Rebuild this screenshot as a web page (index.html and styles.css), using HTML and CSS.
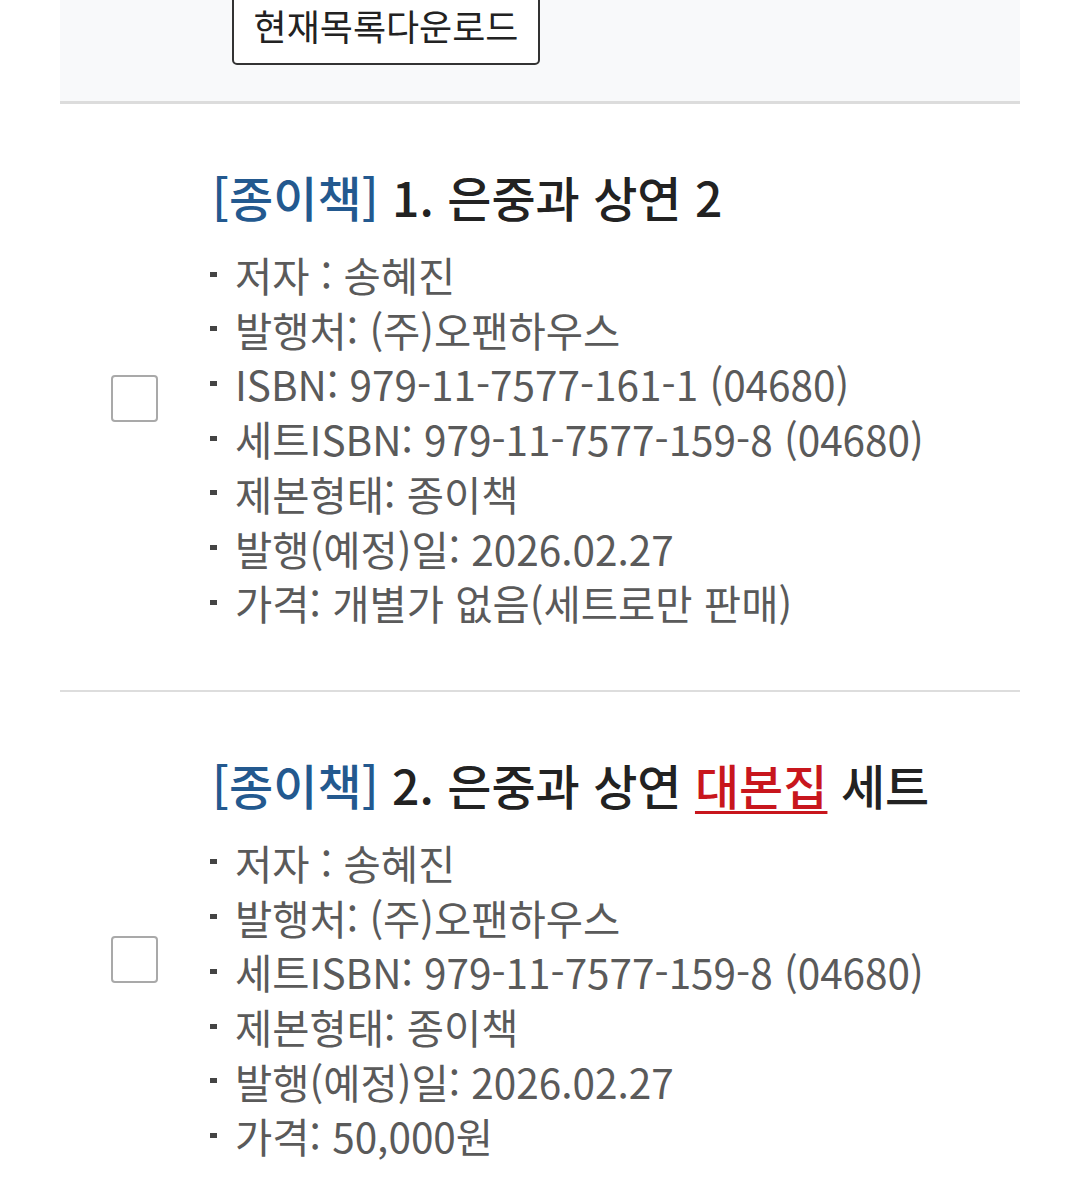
FILE: index.html
```html
<!DOCTYPE html>
<html lang="ko">
<head>
<meta charset="utf-8">
<link rel="stylesheet" href="styles.css">
</head>
<body>
<div class="wrap">
  <div class="panel">
    <button class="dl-btn" type="button">현재목록다운로드</button>
  </div>
  <div class="item">
    <div class="check-col"><span class="checkbox"></span></div>
    <div class="info">
      <div class="title"><span class="kind">[종이책]</span> 1. 은중과 상연 2</div>
      <ul class="meta">
        <li>저자 : 송혜진</li>
        <li>발행처: (주)오팬하우스</li>
        <li>ISBN: 979-11-7577-161-1 (04680)</li>
        <li>세트ISBN: 979-11-7577-159-8 (04680)</li>
        <li>제본형태: 종이책</li>
        <li>발행(예정)일: 2026.02.27</li>
        <li>가격: 개별가 없음(세트로만 판매)</li>
      </ul>
    </div>
  </div>
  <div class="item">
    <div class="check-col"><span class="checkbox"></span></div>
    <div class="info">
      <div class="title"><span class="kind">[종이책]</span> 2. 은중과 상연 <span class="hl">대본집</span> 세트</div>
      <ul class="meta">
        <li>저자 : 송혜진</li>
        <li>발행처: (주)오팬하우스</li>
        <li>세트ISBN: 979-11-7577-159-8 (04680)</li>
        <li>제본형태: 종이책</li>
        <li>발행(예정)일: 2026.02.27</li>
        <li>가격: 50,000원</li>
      </ul>
    </div>
  </div>
</div>
</body>
</html>
```
FILE: styles.css
```css
html, body {
  margin: 0;
  padding: 0;
  background: #ffffff;
}
body {
  font-family: "Noto Sans CJK KR", "Noto Sans", sans-serif;
  overflow: hidden;
}
.wrap {
  padding: 0 60px;
}
.panel {
  background: #f8f9fa;
  border-bottom: 3px solid #dcdcdc;
  padding: 0 0 36px 172px;
}
.dl-btn {
  display: block;
  margin-top: -15px;
  height: 80px;
  width: 308px;
  padding: 0;
  background: #ffffff;
  border: 2.5px solid #333333;
  border-radius: 5px;
  font-family: "Noto Sans CJK KR", sans-serif;
  font-size: 36px;
  color: #222222;
  line-height: 1;
}
.item {
  display: flex;
  align-items: center;
  border-bottom: 2px solid #dddddd;
  padding: 62px 0 59px;
}
.check-col {
  width: 152px;
  flex: none;
  display: flex;
  align-items: center;
}
.checkbox {
  display: block;
  margin-left: 51px;
  width: 43px;
  height: 43px;
  border: 2px solid #a9a9a9;
  border-radius: 4px;
  background: #fff;
}
.info {
  flex: 1;
}
.title {
  font-size: 48px;
  font-weight: 500;
  line-height: 60px;
  color: #222222;
  white-space: nowrap;
}
.kind {
  color: #23598f;
}
.hl {
  color: #c8161d;
  text-decoration: underline;
  text-decoration-thickness: 3px;
  text-underline-offset: 6px;
}
.meta {
  list-style: none;
  margin: 22px 0 0;
  padding: 0;
}
.meta li {
  position: relative;
  padding-left: 23px;
  font-size: 40.5px;
  line-height: 54.7px;
  color: #5a5a5a;
  white-space: nowrap;
  font-weight: 400;
}
.meta li::before {
  content: "";
  position: absolute;
  left: -2px;
  top: 23.5px;
  width: 7px;
  height: 5px;
  background: #444444;
}
```
